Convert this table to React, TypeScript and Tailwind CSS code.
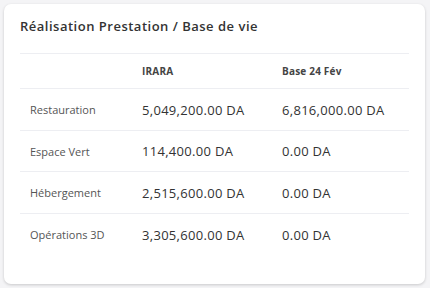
import React from "react";

const rows = [
  { label: "Restauration", a: "5,049,200.00 DA", b: "6,816,000.00 DA" },
  { label: "Espace Vert", a: "114,400.00 DA", b: "0.00 DA" },
  { label: "Hébergement", a: "2,515,600.00 DA", b: "0.00 DA" },
  { label: "Opérations 3D", a: "3,305,600.00 DA", b: "0.00 DA" },
];

export default function App() {
  return (
    <div
      className="w-[430px] h-[288px] bg-[#f4f4f6] pt-[4px] pl-[4px] pr-[5px] pb-[4px]"
      style={{ fontFamily: '"Open Sans", "Noto Sans", sans-serif' }}
    >
      <div className="h-full rounded-[7px] bg-white shadow-[0_1px_3px_rgba(0,0,0,0.18)] px-4 pt-[12px]">
        <div className="text-[13px] leading-[20px] font-semibold text-[#333] tracking-[0.5px]">
          Réalisation Prestation / Base de vie
        </div>
        <div className="mt-[17px] border-t border-[#edeef2]">
          <div className="grid grid-cols-[112px_140px_1fr] h-[35px] items-center border-b border-[#edeef2] text-[10px] font-bold text-[#444] tracking-[0.2px]">
            <div />
            <div className="pl-[10px]">IRARA</div>
            <div className="pl-[10px]">Base 24 Fév</div>
          </div>
          {rows.map((r, i) => (
            <div
              key={r.label}
              className={`grid grid-cols-[112px_140px_1fr] h-[41.5px] items-center pt-[2px] ${
                i < rows.length - 1 ? "border-b border-[#edeef2]" : ""
              }`}
            >
              <div className="pl-[10px] text-[11px] text-[#555]">{r.label}</div>
              <div className="pl-[10px] text-[13px] text-[#333] tracking-[0.3px]">{r.a}</div>
              <div className="pl-[10px] text-[13px] text-[#333] tracking-[0.3px]">{r.b}</div>
            </div>
          ))}
        </div>
      </div>
    </div>
  );
}
